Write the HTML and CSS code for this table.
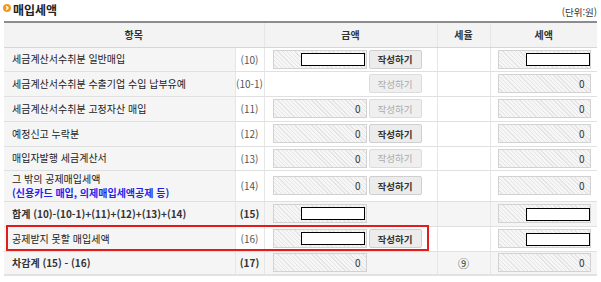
FILE: index.html
```html
<!DOCTYPE html>
<html lang="ko">
<head>
<meta charset="utf-8">
<title>매입세액</title>
<link rel="stylesheet" href="styles.css">
</head>
<body>
<div class="page">
  <div class="titlebar">
    <h2 class="title">
      <svg class="bullet" width="8" height="8" viewBox="0 0 8 8"><circle cx="4" cy="4" r="4" fill="#f29a1f"/><path d="M3.2 2.2 L5 4 L3.2 5.8" stroke="#fff" stroke-width="1.3" fill="none"/></svg>
      매입세액
    </h2>
    <span class="unit">(단위:원)</span>
  </div>
  <div class="tablewrap">
    <table class="grid">
      <colgroup>
        <col class="c-label"><col class="c-no"><col class="c-amt"><col class="c-rate"><col class="c-tax">
      </colgroup>
      <thead>
        <tr><th colspan="2">항목</th><th>금액</th><th>세율</th><th>세액</th></tr>
      </thead>
      <tbody>
        <tr class="short">
          <td class="label">세금계산서수취분 일반매입</td><td class="no">(10)</td>
          <td class="amt"><div class="amtwrap"><span class="field"><span class="mask"></span></span><button class="btn">작성하기</button></div></td>
          <td></td>
          <td class="tax"><span class="field"><span class="mask"></span></span></td>
        </tr>
        <tr>
          <td class="label">세금계산서수취분 수출기업 수입 납부유예</td><td class="no">(10-1)</td>
          <td class="amt"><div class="amtwrap"><span class="field blank"></span><button class="btn off">작성하기</button></div></td>
          <td></td>
          <td class="tax"><span class="field">0</span></td>
        </tr>
        <tr>
          <td class="label">세금계산서수취분 고정자산 매입</td><td class="no">(11)</td>
          <td class="amt"><div class="amtwrap"><span class="field">0</span><button class="btn off">작성하기</button></div></td>
          <td></td>
          <td class="tax"><span class="field">0</span></td>
        </tr>
        <tr>
          <td class="label">예정신고 누락분</td><td class="no">(12)</td>
          <td class="amt"><div class="amtwrap"><span class="field">0</span><button class="btn">작성하기</button></div></td>
          <td></td>
          <td class="tax"><span class="field">0</span></td>
        </tr>
        <tr class="short">
          <td class="label">매입자발행 세금계산서</td><td class="no">(13)</td>
          <td class="amt"><div class="amtwrap"><span class="field">0</span><button class="btn off">작성하기</button></div></td>
          <td></td>
          <td class="tax"><span class="field">0</span></td>
        </tr>
        <tr class="tall">
          <td class="label two"><span class="line">그 밖의 공제매입세액</span><span class="line blue">(신용카드 매입, 의제매입세액공제 등)</span></td><td class="no">(14)</td>
          <td class="amt"><div class="amtwrap"><span class="field">0</span><button class="btn">작성하기</button></div></td>
          <td></td>
          <td class="tax"><span class="field">0</span></td>
        </tr>
        <tr class="sum">
          <td class="label">합계 (10)-(10-1)+(11)+(12)+(13)+(14)</td><td class="no">(15)</td>
          <td class="amt"><div class="amtwrap"><span class="field"><span class="mask"></span></span></div></td>
          <td></td>
          <td class="tax"><span class="field"><span class="mask"></span></span></td>
        </tr>
        <tr>
          <td class="label">공제받지 못할 매입세액</td><td class="no">(16)</td>
          <td class="amt"><div class="amtwrap"><span class="field"><span class="mask"></span></span><button class="btn">작성하기</button></div></td>
          <td></td>
          <td class="tax"><span class="field"><span class="mask"></span></span></td>
        </tr>
        <tr class="sum last short">
          <td class="label">차감계 (15) - (16)</td><td class="no">(17)</td>
          <td class="amt"><div class="amtwrap"><span class="field">0</span></div></td>
          <td class="rate">⑨</td>
          <td class="tax"><span class="field">0</span></td>
        </tr>
      </tbody>
    </table>
    <div class="highlight"></div>
  </div>
</div>
</body>
</html>
```
FILE: styles.css
```css
* { box-sizing: border-box; }
html, body { margin: 0; padding: 0; background: #fff; }
body {
  font-family: "Noto Sans CJK KR", "Noto Sans", sans-serif;
  color: #222;
  font-size: 10px;
}
.page { padding: 0 4px; }
.titlebar {
  height: 21px;
  display: flex;
  align-items: flex-start;
  justify-content: space-between;
}
.title {
  margin: 0;
  padding-top: 3px;
  font-size: 12px;
  font-weight: bold;
  color: #222;
  line-height: 14px;
  display: flex;
  align-items: center;
  gap: 2px;
}
.bullet { margin-left: -1px; margin-top: -4px; }
.unit { font-size: 9.5px; padding-top: 6px; line-height: 12px; color: #333; }
.tablewrap { position: relative; }
.grid {
  width: 100%;
  border-collapse: collapse;
  table-layout: fixed;
  border-top: 2px solid #8c8c8c;
}
.c-label { width: 231px; }
.c-no { width: 29px; }
.c-amt { width: 173px; }
.c-rate { width: 53px; }
.c-tax { width: 107px; }
.grid thead tr { height: 25px; }
.grid th {
  background: #f3f3f3;
  font-weight: bold;
  font-size: 10px;
  color: #333;
  border-bottom: 1px solid #d6d6d6;
  border-left: 1px solid #e6e6e6;
  padding: 0;
}
.grid th:first-child { border-left: 0; }
.grid tbody tr { height: 25px; }
.grid tbody tr.short { height: 24px; }
.grid tbody tr.tall { height: 31px; }
.grid td {
  padding: 0;
  border-bottom: 1px solid #e0e0e0;
  border-left: 1px solid #e6e6e6;
  vertical-align: middle;
}
.grid td:first-child { border-left: 0; }
.grid tr.last td { border-bottom: 2px solid #e2e2e2; }
.label {
  background: #f5f5f5;
  padding-left: 8px !important;
  font-size: 10px;
  color: #222;
  line-height: 12px;
}
.label.two { line-height: 15px; padding-top: 1px !important; }
.line { display: block; line-height: 14.5px; }
.blue { color: #1f1fee; font-weight: bold; }
.no { text-align: center; color: #555; font-size: 10px; }
.sum td { background: #f5f5f5; }
.sum .label, .sum .no { font-weight: bold; color: #333; }
.amtwrap { display: flex; align-items: center; gap: 2px; padding-left: 8px; }
.field {
  display: flex;
  align-items: center;
  justify-content: flex-end;
  width: 94px;
  height: 19px;
  padding-right: 5px;
  border: 1px solid #d2d2d2;
  background: repeating-linear-gradient(45deg, #f6f6f6 0 2px, #e5e5e5 2px 3px);
  font-size: 10px;
  color: #333;
}
.field.blank { border: 0; background: none; }
.field .mask {
  display: block;
  width: 64px;
  height: 13px;
  margin-right: -4px;
  background: #fff;
  border: 1px solid #000;
}
.tax .field { margin-left: 7px; width: 93px; }
.tax .field .mask { margin-right: -5px; margin-top: 1px; }
.btn {
  width: 53px;
  height: 19px;
  padding: 0;
  border: 1px solid #cfcfcf;
  border-radius: 2px;
  background: #ececec;
  font-family: inherit;
  font-size: 9.5px;
  font-weight: bold;
  color: #333;
}
.btn.off { color: #aaa; font-weight: normal; background: #efefef; border-color: #dcdcdc; }
.rate { text-align: center; font-size: 11px; color: #444; }
.highlight {
  position: absolute;
  left: 2px;
  top: 204px;
  width: 423px;
  height: 26px;
  border: 2px solid #e41b1b;
  pointer-events: none;
}
```
